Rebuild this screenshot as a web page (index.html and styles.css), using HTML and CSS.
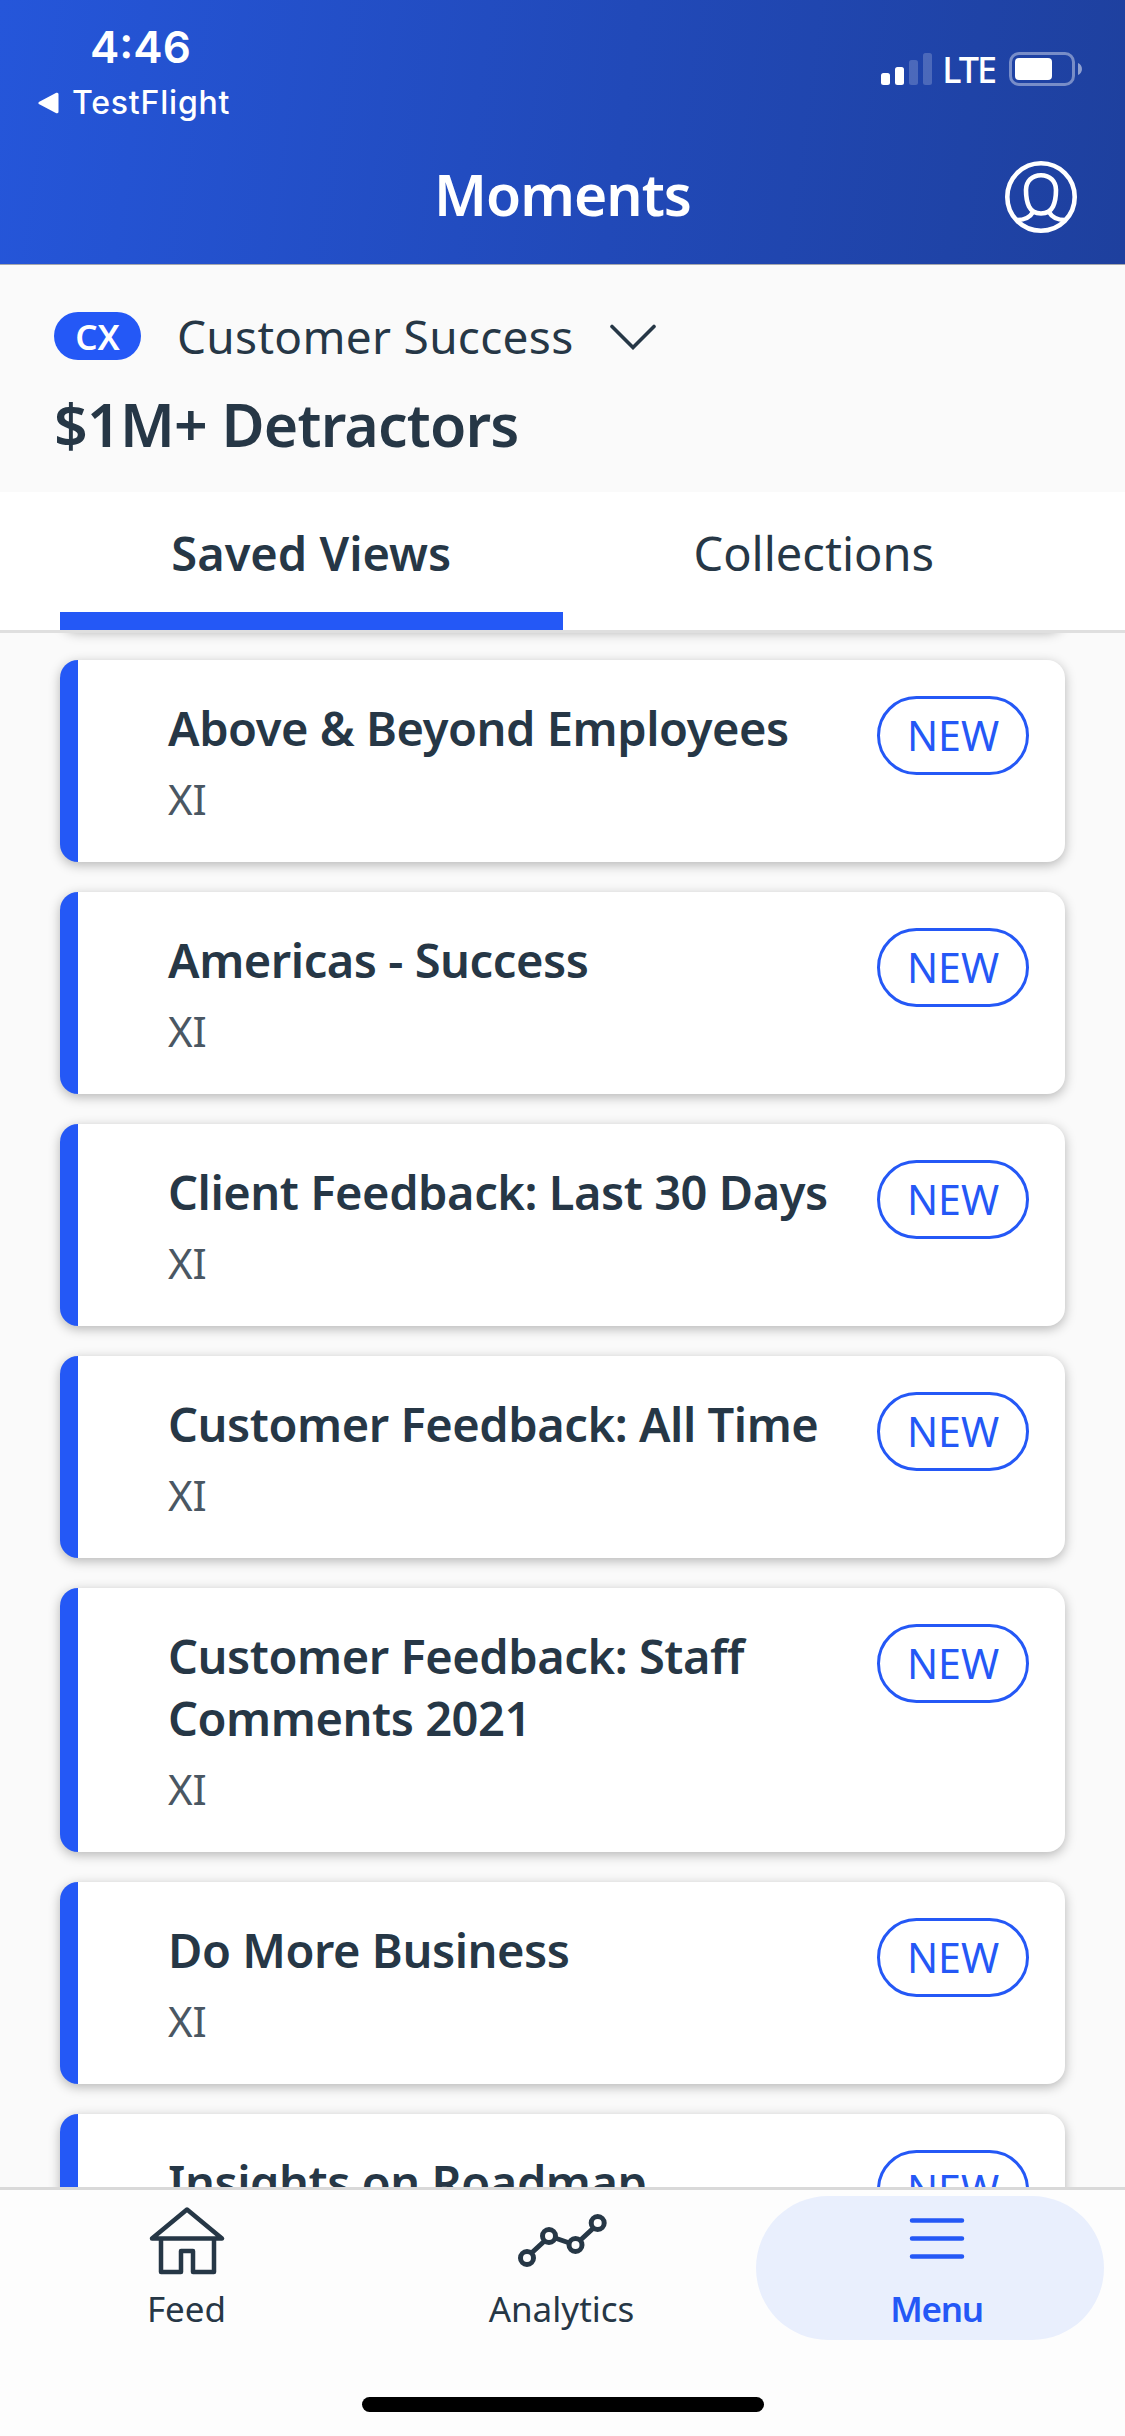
FILE: index.html
```
<!DOCTYPE html>
<html lang="en">
<head>
  <meta charset="UTF-8">
  <meta name="viewport" content="width=device-width, initial-scale=1.0">
  <title>Moments</title>
  <link rel="stylesheet" href="styles.css">
</head>
<body>
  <header class="header">
    <div class="status-bar">
      <div class="status-left">
        <div class="time">4:46</div>
        <div class="back-app">
          <svg width="21" height="22" viewBox="0 0 21 22"><path d="M2 11 L19 2.2 V19.8 Z" fill="#fff" stroke="#fff" stroke-width="3" stroke-linejoin="round"/></svg>
          <span>TestFlight</span>
        </div>
      </div>
      <div class="status-right">
        <svg class="signal" width="51" height="33" viewBox="0 0 51 33" fill="#fff">
          <rect x="0" y="20" width="9" height="12" rx="2.5"/>
          <rect x="14" y="14" width="9" height="18" rx="2.5"/>
          <rect x="28" y="7" width="9" height="25" rx="2.5" opacity="0.2"/>
          <rect x="42" y="0" width="9" height="32" rx="2.5" opacity="0.2"/>
        </svg>
        <span class="network">LTE</span>
        <svg width="74" height="34" viewBox="0 0 74 34">
          <rect x="1.5" y="1.5" width="63" height="31" rx="8.5" fill="none" stroke="#fff" stroke-width="3" opacity="0.4"/>
          <rect x="6" y="6" width="37" height="22" rx="4" fill="#fff"/>
          <path d="M69 11 C74.300 13 74.300 21 69 23 Z" fill="#fff" opacity="0.5"/>
        </svg>
      </div>
    </div>
    <div class="title-bar">
      <h1>Moments</h1>
      <svg class="avatar" width="72" height="72" viewBox="0 0 72 72" fill="none" stroke="#fff" stroke-width="4.600">
        <circle cx="36" cy="36" r="33.700"/>
        <path d="M36 14.200 C45 14.200 51 20.500 51 29 C51 35 50.600 40 48 45.500 C45.500 50.500 41.500 52.500 36 52.500 C30.500 52.500 26.500 50.500 24 45.500 C21.400 40 21 35 21 29 C21 20.500 27 14.200 36 14.200 Z"/>
        <path d="M28 51 C25 56.500 20 59 12 59"/>
        <path d="M44 51 C47 56.500 52 59 60 59"/>
      </svg>
    </div>
  </header>

  <section class="account">
    <div class="account-row">
      <span class="badge">CX</span>
      <span class="account-name">Customer Success</span>
      <svg width="48" height="28" viewBox="0 0 48 28"><path d="M3 4.500 L24 25.500 L45 4.500" fill="none" stroke="#263746" stroke-width="3.600" stroke-linecap="round"/></svg>
    </div>
    <h2>$1M+ Detractors</h2>
  </section>

  <nav class="tabs">
    <a class="tab active">Saved Views</a>
    <a class="tab">Collections</a>
  </nav>

  <main class="list">
    <!-- scrolled out of view -->
    <div class="card card-hidden"></div>

    <div class="card">
      <div class="card-text">
        <h3>Above &amp; Beyond Employees</h3>
        <p>XI</p>
      </div>
      <span class="pill">NEW</span>
    </div>
    <div class="card">
      <div class="card-text">
        <h3>Americas - Success</h3>
        <p>XI</p>
      </div>
      <span class="pill">NEW</span>
    </div>
    <div class="card">
      <div class="card-text">
        <h3>Client Feedback: Last 30 Days</h3>
        <p>XI</p>
      </div>
      <span class="pill">NEW</span>
    </div>
    <div class="card">
      <div class="card-text">
        <h3>Customer Feedback: All Time</h3>
        <p>XI</p>
      </div>
      <span class="pill">NEW</span>
    </div>
    <div class="card">
      <div class="card-text">
        <h3>Customer Feedback: Staff Comments 2021</h3>
        <p>XI</p>
      </div>
      <span class="pill">NEW</span>
    </div>
    <div class="card">
      <div class="card-text">
        <h3>Do More Business</h3>
        <p>XI</p>
      </div>
      <span class="pill">NEW</span>
    </div>
    <div class="card">
      <div class="card-text">
        <h3>Insights on Roadmap</h3>
        <p>XI</p>
      </div>
      <span class="pill">NEW</span>
    </div>
  </main>

  <footer class="bottom-nav">
    <div class="nav-items">
      <a class="nav-item">
        <svg width="96" height="80" viewBox="0 0 96 80" fill="none" stroke="#263746" stroke-width="4.500" stroke-linejoin="round">
          <path d="M48 9.500 L83 38.500 H13 Z"/>
          <path d="M22 38.500 V72 H42 V51 H54 V72 H75 V38.500"/>
        </svg>
        <span>Feed</span>
      </a>
      <a class="nav-item">
        <svg width="96" height="80" viewBox="0 0 96 80" fill="none" stroke="#263746" stroke-width="5">
          <path d="M17.500 53 L30.500 41 M41 38 L55.500 43 M66 40.500 L79.500 28"/>
          <circle cx="13" cy="58" r="6.500"/>
          <circle cx="35" cy="36" r="6.500"/>
          <circle cx="61.500" cy="45" r="6.500"/>
          <circle cx="83.700" cy="23" r="6.500"/>
        </svg>
        <span>Analytics</span>
      </a>
      <a class="nav-item active">
        <svg width="96" height="80" viewBox="0 0 96 80" fill="none" stroke="#2458f6" stroke-width="4.500" stroke-linecap="round">
          <path d="M23 20.500 H73 M23 38.500 H73 M23 56.500 H73"/>
        </svg>
        <span>Menu</span>
      </a>
    </div>
    <div class="home-indicator"></div>
  </footer>
</body>
</html>
```
FILE: styles.css
```
* {
  margin: 0;
  padding: 0;
  box-sizing: border-box;
}

body {
  font-family: 'Noto Sans', sans-serif;
  background-color: #fafafa;
  color: #263746;
  width: 1125px;
  height: 2436px;
  display: flex;
  flex-direction: column;
  overflow: hidden;
}

svg {
  display: block;
  flex-shrink: 0;
}

/* Header */
.header {
  height: 265px;
  flex-shrink: 0;
  background: linear-gradient(98deg, #2556da 0%, #2149b8 55%, #1e409e 100%);
  border-bottom: 1px solid #a5a7ad;
  color: white;
}

.status-bar {
  height: 154px;
  padding: 21px 42px 0 38px;
  display: flex;
  justify-content: space-between;
  align-items: flex-start;
  font-family: 'Inter', sans-serif;
}

.time {
  font-size: 44px;
  line-height: 52px;
  font-weight: 600;
  padding-left: 52px;
}

.back-app {
  display: flex;
  align-items: center;
  gap: 13px;
  margin-top: 12px;
  font-size: 32px;
  line-height: 36px;
  font-weight: 500;
  letter-spacing: 0.8px;
}

.status-right {
  display: flex;
  align-items: center;
  height: 34px;
  margin-top: 31px;
}

.network {
  font-family: 'Noto Sans', sans-serif;
  font-size: 36px;
  line-height: 36px;
  font-weight: 500;
  letter-spacing: -2px;
  margin: 1px 14px 0 10px;
}

.title-bar {
  display: grid;
  grid-template-columns: 72px 1fr 72px;
  padding: 0 48px;
}

.title-bar h1 {
  grid-column: 2;
  text-align: center;
  font-size: 57px;
  line-height: 80px;
  font-weight: 600;
  letter-spacing: -1px;
}

.avatar {
  margin-top: 7px;
}

/* Account */
.account {
  height: 227px;
  flex-shrink: 0;
  padding: 41px 54px 0;
}

.account-row {
  display: flex;
  align-items: center;
  height: 60px;
}

.badge {
  width: 87px;
  height: 48px;
  border-radius: 24px;
  background-color: #2458f6;
  color: white;
  font-size: 35px;
  line-height: 49px;
  font-weight: 600;
  text-align: center;
}

.account-name {
  font-size: 46px;
  line-height: 60px;
  letter-spacing: 0.3px;
  margin: 0 35px 0 36px;
}

.account h2 {
  margin-top: 19px;
  font-size: 59px;
  line-height: 78px;
  font-weight: 600;
  letter-spacing: -0.8px;
}

/* Tabs */
.tabs {
  height: 141px;
  flex-shrink: 0;
  display: flex;
  padding: 0 60px;
  background-color: white;
  border-bottom: 3px solid #dfdfdf;
}

.tab {
  flex: 1;
  padding-top: 30px;
  text-align: center;
  font-size: 47px;
  line-height: 62px;
}

.tab.active {
  font-weight: 600;
  border-bottom: 18px solid #2458f6;
}

/* List */
.list {
  height: 1554px;
  flex-shrink: 0;
  overflow: hidden;
  padding: 0 60px;
}

.card {
  display: flex;
  align-items: flex-start;
  gap: 24px;
  padding: 36px 36px 36px 90px;
  margin-bottom: 30px;
  background-color: white;
  border-left: 18px solid #2458f6;
  border-radius: 18px;
  box-shadow: 0 3px 12px rgba(0, 0, 0, 0.28);
}

.card-hidden {
  height: 202px;
  margin-top: -205px;
}

.card-text {
  flex: 1;
  padding-top: 1px;
}

.card h3 {
  font-size: 47px;
  line-height: 62px;
  font-weight: 600;
  letter-spacing: -0.45px;
}

.card p {
  margin-top: 13px;
  font-size: 42px;
  line-height: 54px;
  color: #4a5763;
}

.pill {
  width: 152px;
  height: 79px;
  border: 3px solid #2458f6;
  border-radius: 40px;
  color: #2458f6;
  font-size: 41px;
  line-height: 73px;
  text-align: center;
}

/* Bottom navigation */
.bottom-nav {
  flex: 1;
  background-color: #fdfdfd;
  border-top: 3px solid #d9d9d9;
  padding-top: 6px;
}

.nav-items {
  display: grid;
  grid-template-columns: repeat(3, 1fr);
}

.nav-item {
  display: flex;
  flex-direction: column;
  align-items: center;
  height: 144px;
  padding: 4px 2px 0 0;
  font-size: 35px;
  line-height: 48px;
}

.nav-item span {
  margin-top: 5px;
}

.nav-item.active {
  margin: 0 21px 0 6px;
  padding: 4px 0 0 13px;
  border-radius: 72px;
  background-color: #e9effd;
  color: #2458f6;
  font-weight: 600;
  letter-spacing: -1.3px;
}

.home-indicator {
  width: 402px;
  height: 15px;
  margin: 57px auto 0;
  border-radius: 8px;
  background-color: black;
}
```
